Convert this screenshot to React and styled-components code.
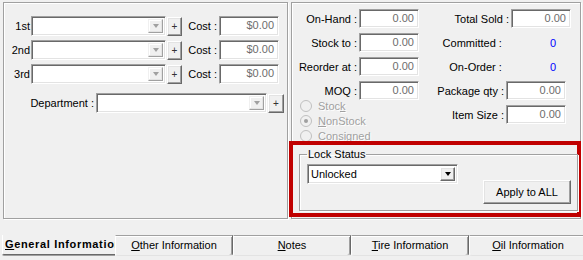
import React from "react";
import styled, { createGlobalStyle, css } from "styled-components";

const GlobalStyle = createGlobalStyle`
  body {
    margin: 0;
    background: #f0f0f0;
    font-family: "Liberation Sans", Arial, sans-serif;
    font-size: 11px;
    color: #000;
  }
`;

const sunken = css`
  box-sizing: border-box;
  border: 1px solid;
  border-color: #a0a0a0 #fff #fff #a0a0a0;
  box-shadow: inset 1px 1px 0 #696969, inset -1px -1px 0 #e3e3e3;
  background: #fff;
`;

const raised = css`
  box-sizing: border-box;
  border: 1px solid;
  border-color: #fff #696969 #696969 #fff;
  box-shadow: inset -1px -1px 0 #a0a0a0, inset 1px 1px 0 #e3e3e3;
  background: #f0f0f0;
`;

const Screen = styled.div`
  width: 583px;
  height: 260px;
  overflow: hidden;
  box-sizing: border-box;
  padding: 2px 0 0 3px;
  display: flex;
  flex-direction: column;
`;

const Panels = styled.div`
  display: flex;
  gap: 3px;
`;

const Panel = styled.div`
  box-sizing: border-box;
  width: ${(p) => p.$w}px;
  height: 217px;
  border: 1px solid #a0a0a0;
  box-shadow: inset 1px 1px 0 #fff, 1px 1px 0 #fff;
  padding-top: ${(p) => p.$pt}px;
  display: flex;
  flex-direction: column;
`;

const Row = styled.div`
  display: flex;
  align-items: center;
  height: ${(p) => p.$h || 20}px;
  margin-top: ${(p) => p.$mt || 0}px;
  margin-bottom: ${(p) => p.$mb || 0}px;
  padding-right: ${(p) => p.$pr || 0}px;
  justify-content: ${(p) => (p.$end ? "flex-end" : "flex-start")};
`;

const Label = styled.span`
  width: ${(p) => (p.$w ? `${p.$w}px` : "auto")};
  text-align: right;
  margin-right: ${(p) => (p.$gap === undefined ? 2 : p.$gap)}px;
  white-space: nowrap;
`;

const ComboBox = styled.div`
  ${sunken};
  width: ${(p) => p.$w}px;
  height: 20px;
  display: flex;
  align-items: stretch;
  padding: 2px;
`;

const ComboText = styled.span`
  flex: 1;
  padding-left: 1px;
  line-height: 15px;
  color: #000;
`;

const ArrowButton = styled.span`
  ${raised};
  width: 15px;
  display: flex;
  align-items: center;
  justify-content: center;
  ${(p) =>
    p.$disabled &&
    css`
      border-color: #f0f0f0 #a0a0a0 #a0a0a0 #f0f0f0;
      box-shadow: inset -1px -1px 0 #e3e3e3, inset 1px 1px 0 #fff;
    `}
`;

const Triangle = styled.span`
  width: 0;
  height: 0;
  border-left: 3.5px solid transparent;
  border-right: 3.5px solid transparent;
  border-top: 4px solid ${(p) => (p.$disabled ? "#a0a0a0" : "#000")};
`;

const PlusButton = styled.span`
  ${raised};
  width: ${(p) => p.$w || 15}px;
  height: 19px;
  margin-left: 1px;
  display: flex;
  align-items: center;
  justify-content: center;
  font-size: 10px;
  color: #333;
  padding-top: 1px;
`;

const Field = styled.div`
  ${sunken};
  width: 60px;
  height: ${(p) => p.$h || 20}px;
  text-align: right;
  padding: 0 4px;
  line-height: ${(p) => (p.$h || 20) - 3}px;
  color: #6d6d6d;
`;

const Columns = styled.div`
  display: flex;
`;

const LeftCol = styled.div`
  width: 127px;
  display: flex;
  flex-direction: column;
  gap: 5px;
`;

const RightCol = styled.div`
  flex: 1;
  display: flex;
  flex-direction: column;
  gap: 5px;
`;

const Count = styled.span`
  color: #0000ff;
  margin-left: ${(p) => p.$ml}px;
`;

const Radios = styled.div`
  margin-top: -7px;
  padding-left: 8px;
  display: flex;
  flex-direction: column;
`;

const RadioRow = styled.div`
  height: 15px;
  display: flex;
  align-items: center;
  gap: 6px;
  color: #a0a0a0;
  text-shadow: 1px 1px 0 #fff;
`;

const RadioDot = styled.span`
  box-sizing: border-box;
  width: 12px;
  height: 12px;
  border-radius: 50%;
  border: 1px solid #c0c0c0;
  background: #f0f0f0;
  display: flex;
  align-items: center;
  justify-content: center;
  &::after {
    content: "";
    width: 4px;
    height: 4px;
    border-radius: 50%;
    background: ${(p) => (p.$checked ? "#a0a0a0" : "transparent")};
  }
`;

const RedFrame = styled.div`
  box-sizing: border-box;
  height: 76px;
  margin: -2px -1px 0 -3px;
  border: 4px solid #c00000;
  display: flex;
  flex-direction: column;
`;

const Group = styled.fieldset`
  margin: 3px -1px 0 6px;
  padding: 3px 6px 6px 7px;
  border: 1px solid #a0a0a0;
  box-shadow: inset 1px 1px 0 #fff, 1px 1px 0 #fff;
  display: flex;
  align-items: flex-start;
`;

const Legend = styled.legend`
  padding: 0 1px;
  line-height: 13px;
`;

const ApplyButton = styled.button`
  ${raised};
  width: 88px;
  height: 24px;
  margin: 16px 0 0 auto;
  font: inherit;
  color: #000;
  padding: 0;
`;

const TabStrip = styled.div`
  display: flex;
  margin: 16px 0 0 -3px;
  height: 21px;
`;

const ActiveTab = styled.div`
  box-sizing: border-box;
  flex: none;
  width: 113px;
  margin-left: 2px;
  height: 20px;
  padding-left: 2px;
  font-weight: bold;
  letter-spacing: 0.65px;
  line-height: 19px;
  white-space: nowrap;
  overflow: hidden;
  border-left: 1px solid #fff;
  border-bottom: 1px solid #696969;
  border-bottom-left-radius: 2px;
  box-shadow: 0 1px 0 #a0a0a0;
`;

const Tab = styled.div`
  box-sizing: border-box;
  flex: none;
  width: 118px;
  height: 21px;
  border-top: 1px solid #a0a0a0;
  border-left: 1px solid #fff;
  border-right: 1px solid #696969;
  border-bottom: 1px solid #e3e3e3;
  border-radius: 0 0 3px 3px;
  box-shadow: inset 0 1px 0 #fff, inset -1px 0 0 #a0a0a0;
  text-align: center;
  line-height: 18px;
  white-space: nowrap;
`;

const Combo = ({ w, text, disabled = true }) => (
  <ComboBox $w={w}>
    <ComboText>{text}</ComboText>
    <ArrowButton $disabled={disabled}>
      <Triangle $disabled={disabled} />
    </ArrowButton>
  </ComboBox>
);

const vendors = ["1st", "2nd", "3rd"];

export default function App() {
  return (
    <>
      <GlobalStyle />
      <Screen>
        <Panels>
          <Panel $w={285} $pt={13}>
            {vendors.map((v) => (
              <Row key={v} $mb={4}>
                <Label $w={26} $gap={1}>
                  {v}
                </Label>
                <Combo w={135} />
                <PlusButton>+</PlusButton>
                <Label $w={35}>Cost :</Label>
                <Field>$0.00</Field>
              </Row>
            ))}
            <Row $mt={5}>
              <Label $w={90}>Department :</Label>
              <Combo w={171} />
              <PlusButton $w={16}>+</PlusButton>
            </Row>
          </Panel>

          <Panel $w={290} $pt={6}>
            <Columns>
              <LeftCol>
                {["On-Hand :", "Stock to :", "Reorder at :", "MOQ :"].map((t) => (
                  <Row key={t} $h={19}>
                    <Label $w={65}>{t}</Label>
                    <Field $h={19}>0.00</Field>
                  </Row>
                ))}
                <Radios>
                  <RadioRow>
                    <RadioDot />
                    <span>
                      Stoc<u>k</u>
                    </span>
                  </RadioRow>
                  <RadioRow>
                    <RadioDot $checked />
                    <span>
                      <u>N</u>onStock
                    </span>
                  </RadioRow>
                  <RadioRow>
                    <RadioDot />
                    <span>Consigned</span>
                  </RadioRow>
                </Radios>
              </LeftCol>
              <RightCol>
                <Row $h={19} $end $pr={9}>
                  <Label>Total Sold :</Label>
                  <Field $h={19}>0.00</Field>
                </Row>
                <Row $h={19} $end $pr={24}>
                  <Label $gap={0}>Committed :</Label>
                  <Count $ml={48}>0</Count>
                </Row>
                <Row $h={19} $end $pr={24}>
                  <Label $gap={0}>On-Order :</Label>
                  <Count $ml={48}>0</Count>
                </Row>
                <Row $h={19} $end $pr={14}>
                  <Label>Package qty :</Label>
                  <Field $h={19}>0.00</Field>
                </Row>
                <Row $h={19} $end $pr={14}>
                  <Label>Item Size :</Label>
                  <Field $h={19}>0.00</Field>
                </Row>
              </RightCol>
            </Columns>
            <RedFrame>
              <Group>
                <Legend>Lock Status</Legend>
                <Combo w={151} text="Unlocked" disabled={false} />
                <ApplyButton>Apply to ALL</ApplyButton>
              </Group>
            </RedFrame>
          </Panel>
        </Panels>

        <TabStrip>
          <ActiveTab>
            <u>G</u>eneral Information
          </ActiveTab>
          <Tab>
            <u>O</u>ther Information
          </Tab>
          <Tab>
            <u>N</u>otes
          </Tab>
          <Tab>
            <u>T</u>ire Information
          </Tab>
          <Tab>
            <u>O</u>il Information
          </Tab>
        </TabStrip>
      </Screen>
    </>
  );
}
